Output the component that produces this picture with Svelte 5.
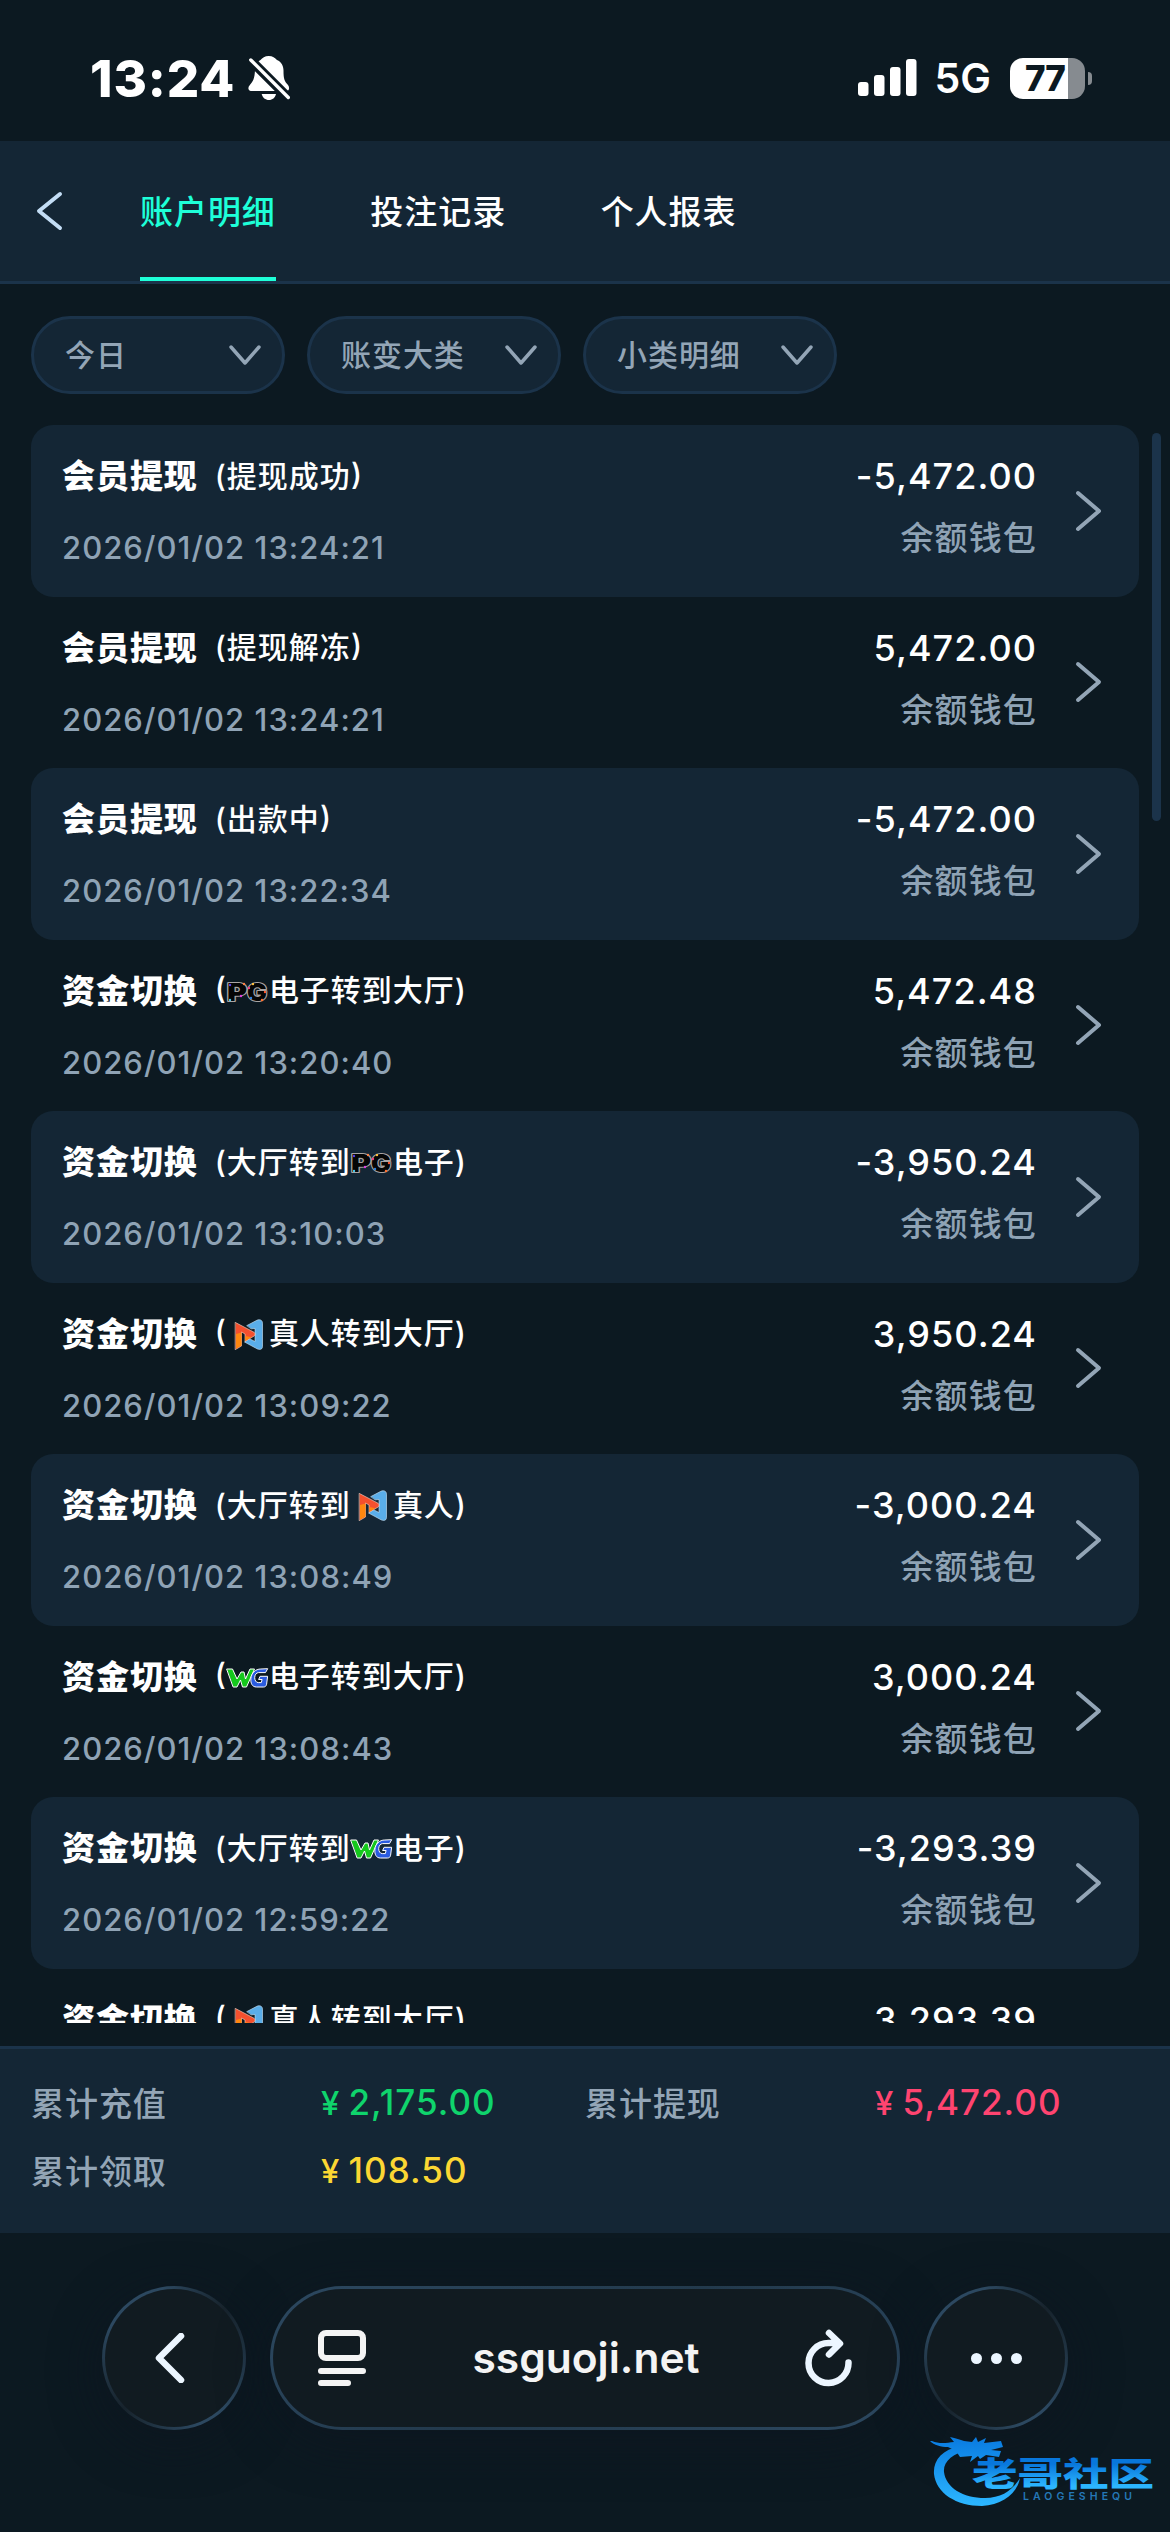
<script>
	const tabs = ["账户明细", "投注记录", "个人报表"];
	const filters = ["今日", "账变大类", "小类明细"];

	// icon sits inside the note, between `before` and `after`
	const rows = [
		{ type: "会员提现", before: "提现成功", time: "2026/01/02 13:24:21", amount: "-5,472.00" },
		{ type: "会员提现", before: "提现解冻", time: "2026/01/02 13:24:21", amount: "5,472.00" },
		{ type: "会员提现", before: "出款中", time: "2026/01/02 13:22:34", amount: "-5,472.00" },
		{ type: "资金切换", icon: "pg", after: "电子转到大厅", time: "2026/01/02 13:20:40", amount: "5,472.48" },
		{ type: "资金切换", before: "大厅转到", icon: "pg", after: "电子", time: "2026/01/02 13:10:03", amount: "-3,950.24" },
		{ type: "资金切换", icon: "n", after: "真人转到大厅", time: "2026/01/02 13:09:22", amount: "3,950.24" },
		{ type: "资金切换", before: "大厅转到", icon: "n", after: "真人", time: "2026/01/02 13:08:49", amount: "-3,000.24" },
		{ type: "资金切换", icon: "wg", after: "电子转到大厅", time: "2026/01/02 13:08:43", amount: "3,000.24" },
		{ type: "资金切换", before: "大厅转到", icon: "wg", after: "电子", time: "2026/01/02 12:59:22", amount: "-3,293.39" },
		{ type: "资金切换", icon: "n", after: "真人转到大厅", time: "", amount: "3,293.39" },
	];

	const totals = [
		{ label: "累计充值", value: "2,175.00", tone: "green" },
		{ label: "累计提现", value: "5,472.00", tone: "red" },
		{ label: "累计领取", value: "108.50", tone: "yellow" },
	];

	let activeTab = $state(0);
</script>

<div class="screen">
	<div class="status">
		<div class="clock">
			<span class="time">13:24</span>
			<svg width="43" height="46" viewBox="0 0 43 46">
				<path d="M20.700 1c4 0 6.300 2 8.300 4 4.500 2 6.500 6 6.500 10.500 0 8 .7 10.500 4.500 14.500 1.800 2.500 1.500 6-1.800 6H3C0 36-.3 32.500 1.500 30.500 5.500 26 6.500 23 7 15.500 7.300 9.500 9 7 12.500 5c2-2 4.200-4 8.200-4z" fill="#fff" />
				<path d="M13.700 39H28c-.8 3.800-3.600 6-7.100 6s-6.400-2.200-7.200-6z" fill="#fff" />
				<path d="M2.500 5l38 38" stroke="#0c1921" stroke-width="9.500" />
				<path d="M2.800 5l37.500 37.500" stroke="#fff" stroke-width="3.400" />
			</svg>
		</div>
		<div class="signal">
			<svg class="bars" width="59" height="38" viewBox="0 0 59 38">
				<rect x="0" y="23" width="10.500" height="14" rx="3" />
				<rect x="16" y="16" width="10.500" height="21" rx="3" />
				<rect x="32" y="8" width="10.500" height="29" rx="3" />
				<rect x="48" y="0" width="10.500" height="37" rx="3" />
			</svg>
			<span class="net">5G</span>
			<div class="battery"><span class="level">77</span></div>
			<span class="nub"></span>
		</div>
	</div>

	<div class="tabs">
		<svg class="back" width="28" height="40" viewBox="0 0 28 40">
			<path d="M24 3L3 20l21 17" />
		</svg>
		{#each tabs as tab, i}
			<button class="tab" class:active={i === activeTab} onclick={() => (activeTab = i)}>{tab}</button>
		{/each}
	</div>

	<div class="filters">
		{#each filters as filter}
			<div class="filter">
				<span>{filter}</span>
				<svg width="32" height="21" viewBox="0 0 32 21"><path d="M2 2l14 16L30 2" /></svg>
			</div>
		{/each}
	</div>

	<div class="list">
		{#each rows as row}
			<div class="row">
				<div class="info">
					<div class="head">
						<span class="type">{row.type}</span>
						<span class="note">
							<span>({row.before ?? ""}</span>
							{#if row.icon === "pg"}
								<svg class="logo" width="42" height="32" viewBox="0 0 42 32">
									<g class="pg">
										<text x="0" y="28" textLength="20" lengthAdjust="spacingAndGlyphs">P</text>
										<text x="20" y="28" textLength="20" lengthAdjust="spacingAndGlyphs">G</text>
									</g>
									<g>
										<circle cx="3" cy="12" r="1.200" fill="#5540e8" />
										<circle cx="17" cy="11" r="1.200" fill="#ff8040" />
										<circle cx="3" cy="27" r="1.200" fill="#45c8ee" />
										<circle cx="14" cy="23" r="1.200" fill="#e040e0" />
										<circle cx="22" cy="15" r="1.200" fill="#f04080" />
										<circle cx="26" cy="11" r="1.200" fill="#ffc040" />
										<circle cx="24" cy="25" r="1.200" fill="#3080e0" />
										<circle cx="38" cy="19" r="1.200" fill="#ff5a30" />
										<circle cx="35" cy="27" r="1.200" fill="#ff7030" />
									</g>
								</svg>
							{:else if row.icon === "n"}
								<svg class="logo" width="42" height="32" viewBox="0 -3 42 32">
									<path class="blue" d="M20 6.500L30 1.200c3-1.200 5.500 0 5.500 3v23c0 3-2 3.800-5 2.800L17.500 23l4.500-3.500 6 3V9.500l-3.500.3z" />
									<path class="red" d="M8.500 3.500L27 13.200c1.400 1 1.400 2.800 0 3.900L18 22.500V15l-3.500-2v14l-6 3.500z" />
									<path class="orange" d="M9 15l5.500-1.500v13L9 29.800zM18.300 17l6 1.200-6 3.800z" />
								</svg>
							{:else if row.icon === "wg"}
								<svg class="logo" width="42" height="32" viewBox="1 -4.500 42 32">
									<path class="green" d="M1 5.500h5.500l4.500 10 4-7h3l1.500 7L24 5.500h4.500L20.500 23.500h-4l-2-7-3.500 7H7.500z" />
									<path class="navy" d="M41.500 5.500l-2 3.600h-7c-2.200 0-3.800 2.500-3.800 5s1.200 5 3.600 5h3l.8-3.100h-3.500l1.500-3.200h7.500l-1 8c-.4 1.800-1.400 2.700-3.200 2.700h-7c-4.200 0-6-3.800-5.500-8.500.5-5.500 4.500-9.500 9.600-9.500z" />
								</svg>
							{/if}
							<span>{row.after ?? ""})</span>
						</span>
					</div>
					<div class="date">{row.time}</div>
				</div>
				<div class="sum">
					<div class="amount">{row.amount}</div>
					<div class="wallet">余额钱包</div>
				</div>
				<svg class="more" width="28" height="44" viewBox="0 0 28 44"><path d="M3 4l21 18L3 40" /></svg>
			</div>
		{/each}
		<span class="scrollbar"></span>
	</div>

	<div class="totals">
		{#each totals as item}
			<span class="label">{item.label}</span>
			<span class="value {item.tone}"><span class="yen">¥</span>{item.value}</span>
		{/each}
	</div>

	<div class="browser">
		<div class="glass round">
			<svg class="prev" width="30" height="50" viewBox="0 0 30 50"><path d="M26 3L4 25l22 22" /></svg>
		</div>
		<div class="glass bar">
			<svg width="50" height="58" viewBox="0 0 50 58">
				<rect x="4" y="4" width="42" height="25" rx="5" />
				<path d="M4 42h42M4 54h27" />
			</svg>
			<span class="url">ssguoji.net</span>
			<svg class="reload" width="48" height="58" viewBox="0 0 48 58">
				<path d="M43.500 33.500A20 20 0 1 1 23.500 14H34M24 4l11 10.500L24 25.500" />
			</svg>
		</div>
		<div class="glass round dots"><i></i><i></i><i></i></div>
	</div>

	<svg class="watermark" width="226" height="82" viewBox="0 0 226 82">
		<defs>
			<linearGradient id="wm" x1="0" y1="0" x2="0" y2="1">
				<stop offset="0.25" stop-color="#0877dc" />
				<stop offset="0.8" stop-color="#2cb6ff" />
			</linearGradient>
			<linearGradient id="wmRing" gradientUnits="userSpaceOnUse" x1="0" y1="10" x2="0" y2="75">
				<stop offset="0" stop-color="#0a7de2" />
				<stop offset="1" stop-color="#2cb6ff" />
			</linearGradient>
		</defs>
		<path d="M30 16C12 20 3 30 4 44c2 19 22 32 48 32 20-1 35-12 38-28-8 13-19 20-35 20-22 0-39-10-41-26-1-10 8-19 26-22z" fill="url(#wmRing)" />
		<path d="M2 11c7 3 14 2 22 1l-4-5c6 1 10 3 14 4l8 1 4-5 2 5 8-4-2 5 17-2 2 6-12 3 10 1-2 6-13-2-6 4-2-3-8 6 2-6-12 1-4-6-8-4c-7 0-14-2-18-6z" fill="url(#wmRing)" />
		<text class="wmName" x="42" y="56" textLength="182" lengthAdjust="spacingAndGlyphs" fill="url(#wm)">老哥社区</text>
		<text class="wmSub" x="93" y="70" textLength="110">LAOGESHEQU</text>
	</svg>
</div>

<style>
	:global(body) {
		margin: 0;
		background: #0c1921;
	}
	.screen {
		position: relative;
		width: 1170px;
		height: 2532px;
		overflow: hidden;
		display: flex;
		flex-direction: column;
		background: #0c1921;
		color: #fff;
		font-family: Inter, "Noto Sans CJK SC", sans-serif;
		font-size: 33px;
		font-weight: 500;
		letter-spacing: 0.95px;
	}
	.screen * {
		box-sizing: border-box;
	}
	svg {
		display: block;
		flex: none;
		fill: none;
		stroke-linecap: round;
		stroke-linejoin: round;
	}

	.status {
		height: 141px;
		flex: none;
		padding: 15px 78px 0 90px;
		display: flex;
		align-items: center;
		justify-content: space-between;
	}
	.clock,
	.signal {
		display: flex;
		align-items: center;
	}
	.clock {
		gap: 13px;
	}
	.time {
		font-size: 51px;
		font-weight: 800;
		letter-spacing: 0.9px;
	}
	.bars {
		fill: #fff;
	}
	.net {
		margin: 0 19px 0 18px;
		font-size: 41px;
		font-weight: 600;
		letter-spacing: 0;
	}
	.battery {
		width: 75px;
		height: 41px;
		padding-right: 5px;
		border-radius: 13px;
		display: flex;
		align-items: center;
		justify-content: center;
		background: linear-gradient(90deg, #fff 77%, #868b90 77%);
	}
	.level {
		color: #0c1921;
		font-size: 35px;
		font-weight: 800;
		letter-spacing: -1px;
	}
	.nub {
		width: 4px;
		height: 13px;
		margin-left: 3px;
		border-radius: 0 4px 4px 0;
		background: #868b90;
	}

	.tabs {
		height: 143px;
		flex: none;
		padding-left: 36px;
		display: flex;
		align-items: stretch;
		background: #142635;
		border-bottom: 3px solid #1b334a;
	}
	.back {
		align-self: center;
		margin-right: 76px;
		stroke: #c3ddf5;
		stroke-width: 4;
	}
	.tab {
		margin-right: 94.5px;
		padding: 1px 0 0;
		border: 0;
		border-bottom: 4px solid transparent;
		background: none;
		color: #fff;
		font: inherit;
		letter-spacing: inherit;
	}
	.tab.active {
		color: #1effd8;
		border-color: #1effd8;
	}

	.filters {
		height: 141px;
		flex: none;
		padding: 32px 31px 0;
		display: flex;
		gap: 22px;
	}
	.filter {
		width: 254px;
		height: 78px;
		padding: 0 21px 0 31px;
		display: flex;
		align-items: center;
		justify-content: space-between;
		border: 3px solid #1b334a;
		border-radius: 39px;
		background: #142635;
		color: #93a5b6;
		font-size: 30px;
	}
	.filter span {
		margin-top: -4px;
	}
	.filter svg,
	.more {
		stroke: #93a5b6;
		stroke-width: 3.5;
	}

	.list {
		position: relative;
		height: 1598px;
		flex: none;
		padding: 0 31px;
		overflow: hidden;
	}
	.row {
		height: 171.5px;
		padding: 0 36px 0 31px;
		display: flex;
		border-radius: 22px;
	}
	.row:nth-child(odd) {
		background: #142635;
	}
	.info {
		flex: 1;
		padding-top: 25px;
	}
	.head {
		height: 48px;
		display: flex;
		align-items: center;
		gap: 17px;
	}
	.type {
		font-weight: 900;
	}
	.note {
		display: flex;
		align-items: center;
		font-size: 30px;
		letter-spacing: 1px;
	}
	.note span {
		margin-top: -1px;
	}
	.logo {
		overflow: visible;
	}
	.pg {
		font-family: Inter, sans-serif;
		font-size: 24px;
		font-weight: 900;
		letter-spacing: 0;
		fill: #050505;
		stroke: #a9a4a4;
		stroke-width: 2.2px;
		paint-order: stroke;
	}
	.blue {
		fill: #5aaeea;
		stroke: #cfe8fa;
		stroke-width: 0.6;
	}
	.red {
		fill: #f4502e;
		stroke: #ffd9c8;
		stroke-width: 0.6;
	}
	.orange {
		fill: #ff870f;
	}
	path.green {
		fill: #15c81c;
		stroke: #fff;
		stroke-width: 1;
	}
	.navy {
		fill: #2a5be0;
		stroke: #fff;
		stroke-width: 1;
	}
	.date {
		margin-top: 26px;
		line-height: 48px;
		color: #8fa3b5;
		font-size: 31px;
		letter-spacing: 1.05px;
	}
	.sum {
		padding-top: 27px;
		text-align: right;
	}
	.amount {
		line-height: 48px;
		font-size: 36px;
		font-weight: 550;
		letter-spacing: 1.05px;
	}
	.wallet {
		margin-top: 14px;
		line-height: 48px;
		color: #8fa3b5;
		letter-spacing: 1.15px;
	}
	.more {
		align-self: center;
		margin-left: 38px;
		stroke-width: 4;
	}
	.scrollbar {
		position: absolute;
		top: 8px;
		right: 9px;
		width: 9px;
		height: 388px;
		border-radius: 5px;
		background: #1b334a;
	}

	.totals {
		height: 187px;
		margin-top: 23px;
		flex: none;
		padding: 19px 31px 0;
		display: grid;
		grid-template-columns: 290px 264px 290px 1fr;
		grid-auto-rows: 68px;
		align-items: center;
		align-content: start;
		background: #142635;
		border-top: 3px solid #1b334a;
	}
	.label {
		color: #93a5b6;
	}
	.value {
		font-size: 35px;
		letter-spacing: 1.05px;
	}
	.yen {
		margin-right: 8px;
		font-size: 33px;
	}
	.value.green {
		color: #0fd46c;
	}
	.value.red {
		color: #ff4470;
	}
	.value.yellow {
		color: #fbd733;
	}

	.browser {
		padding: 53px 102px 0;
		display: flex;
		justify-content: space-between;
	}
	.glass {
		position: relative;
		height: 144px;
		display: flex;
		align-items: center;
		border: 3px solid transparent;
		border-radius: 72px;
		background:
			linear-gradient(#111b21, #111b21) padding-box,
			linear-gradient(135deg, #2c4860 12%, #2c4860 25%, #15212b 50%, #2c4860 75%) border-box;
		background:
			linear-gradient(#111b21, #111b21) padding-box,
			conic-gradient(from 45deg, #17232c, #2c4860 25%, #2c4860 32%, #17232c 50%, #2c4860 70%, #2c4860 85%, #17232c) border-box;
		box-shadow: 0 12px 50px rgba(13, 21, 32, 0.7);
	}
	.round {
		width: 144px;
		justify-content: center;
	}
	.bar {
		width: 630px;
		padding: 0 44px;
		justify-content: space-between;
		background:
			linear-gradient(#111b21, #111b21) padding-box,
			linear-gradient(150deg, #2c4860, #22394c 50%, #2c4860) border-box;
	}
	.bar svg {
		stroke: #f4f4f4;
		stroke-width: 6;
	}
	.bar .reload,
	.prev {
		stroke: #ecf6ff;
		stroke-width: 6.5;
	}
	.prev {
		margin-right: 8px;
	}
	.url {
		margin-top: -2px;
		color: #f4f4f4;
		font-size: 42.5px;
		font-weight: 600;
		letter-spacing: 0;
	}
	.dots {
		gap: 9px;
	}
	.dots i {
		width: 11px;
		height: 11px;
		border-radius: 50%;
		background: #ecf6ff;
	}

	.watermark {
		position: absolute;
		left: 930px;
		top: 2430px;
	}
	.wmName {
		font-size: 33px;
		font-weight: 900;
		letter-spacing: 0;
	}
	.wmSub {
		font-size: 10.5px;
		fill: #2478b8;
		font-weight: 600;
	}
</style>
